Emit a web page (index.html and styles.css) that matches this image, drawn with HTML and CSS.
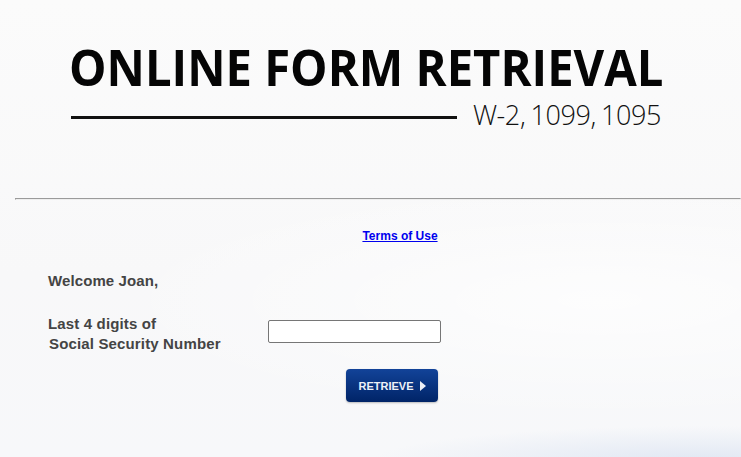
FILE: index.html
```html
<!DOCTYPE html>
<html lang="en">
<head>
    <meta charset="UTF-8">
    <meta name="viewport" content="width=device-width, initial-scale=1.0">
    <title>Online Form Retrieval</title>
    <link rel="stylesheet" href="styles.css">
</head>
<body>
    <header class="banner">
        <h1 class="title">ONLINE FORM RETRIEVAL</h1>
        <div class="subtitle-row">
            <span class="rule"></span>
            <span class="forms">W-2, 1099, 1095</span>
        </div>
    </header>

    <hr class="divider">

    <div class="content">
        <p class="terms"><a href="#">Terms of Use</a></p>
        <p class="welcome">Welcome Joan,</p>

        <form class="ssn-form" id="ssn-form">
            <label for="ssn">Last 4 digits of<br><span class="indent">Social Security Number</span></label>
            <input type="text" id="ssn" maxlength="4">
            <button type="submit">RETRIEVE<span class="arrow"></span></button>
        </form>
    </div>
</body>
</html>
```

FILE: styles.css
```css
html, body {
    overflow: hidden;
}
body {
    margin: 0;
    min-height: 100vh;
    font-family: "Liberation Sans", Arial, sans-serif;
    color: #444;
    background:
        radial-gradient(ellipse 330px 36px at 700px 462px, rgba(220, 228, 242, 0.85), rgba(220, 228, 242, 0) 100%),
        radial-gradient(ellipse 500px 120px at 600px 300px, rgba(255, 255, 255, 0.7), rgba(255, 255, 255, 0) 100%),
        linear-gradient(to bottom, #fbfbfb 0%, #f8f8f9 60%, #f7f8fa 100%);
}

/* header */
.banner {
    padding: 41px 0 0 69px;
    width: 592px;
}
.title {
    display: block;
    width: 640px;
    height: 51px;
    margin: 0;
    overflow: visible;
    font-family: "Open Sans", sans-serif;
    font-weight: 700;
    font-size: 51px;
    line-height: 51px;
    color: #050505;
    white-space: nowrap;
    transform: scaleX(0.925);
    transform-origin: left center;
}
.subtitle-row {
    display: flex;
    margin-top: 9px;
    height: 28px;
}
.rule {
    flex: 1;
    height: 3px;
    margin: 15px 16px 0 2px;
    background: #111;
}
.forms {
    font-family: "Open Sans", sans-serif;
    font-weight: 300;
    font-size: 27px;
    line-height: 28px;
    letter-spacing: -0.4px;
    word-spacing: -1.5px;
    color: #111;
    white-space: nowrap;
}

.divider {
    margin: 69px 0 0 15px;
}

/* form area */
.content {
    margin-left: 15px;
}
.terms {
    margin: 29px 0 0;
    padding-left: 44px;
    text-align: center;
    font-size: 12px;
    font-weight: bold;
}
.terms a {
    color: #0000ee;
}
.welcome {
    margin: 29px 0 0 33px;
    font-size: 15px;
    font-weight: bold;
    letter-spacing: 0.1px;
}
.ssn-form {
    display: grid;
    grid-template-columns: 220px 173px;
    margin: 25px 0 0 33px;
}
.ssn-form label {
    font-size: 15px;
    font-weight: bold;
    line-height: 20px;
    letter-spacing: 0.15px;
}
.indent {
    padding-left: 1px;
}
.ssn-form input {
    box-sizing: border-box;
    width: 173px;
    height: 23px;
    margin-top: 6px;
    border: 1px solid #767676;
    border-radius: 2px;
    background: #fff;
}
.ssn-form button {
    grid-column: 2;
    justify-self: start;
    width: 92px;
    height: 33px;
    margin: 15px 0 0 78px;
    padding: 0;
    border: none;
    border-radius: 4px;
    background: linear-gradient(to bottom, #124399, #002467);
    box-shadow: 0 1px 2px rgba(0, 0, 0, 0.25);
    color: #eef1f7;
    font-family: "Liberation Sans", Arial, sans-serif;
    font-size: 11px;
    font-weight: bold;
    cursor: pointer;
}
.arrow {
    display: inline-block;
    width: 0;
    height: 0;
    margin-left: 6px;
    border-top: 5px solid transparent;
    border-bottom: 5px solid transparent;
    border-left: 6px solid #eef1f7;
    vertical-align: -1px;
}
```
